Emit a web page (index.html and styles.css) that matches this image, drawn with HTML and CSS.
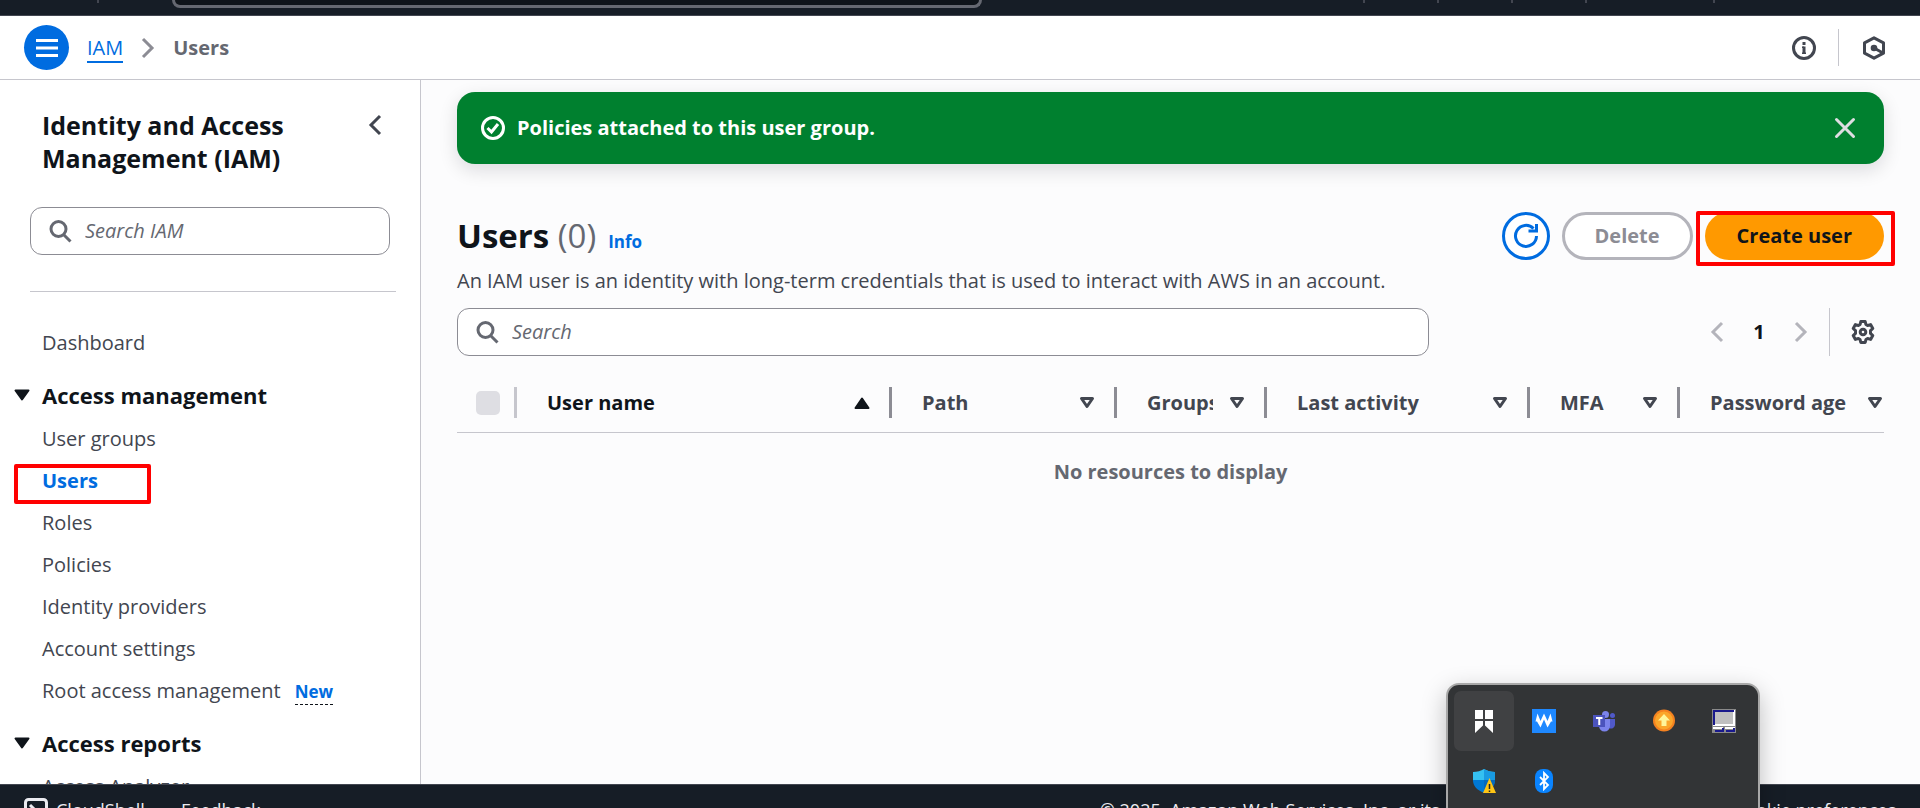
FILE: index.html
```html
<!DOCTYPE html>
<html lang="en">
<head>
<meta charset="utf-8">
<title>Users | IAM</title>
<link rel="stylesheet" href="styles.css">
</head>
<body>
<div class="page">
  <div class="topbar">
    <span class="topbar-rule"></span>
    <div class="topbar-search"></div>
    <div class="topbar-tools"><span class="topbar-rule"></span><span class="topbar-rule"></span><span class="topbar-rule"></span><span class="topbar-rule"></span><span class="topbar-rule topbar-account"></span></div>
  </div>

  <header class="crumbs-bar">
    <button class="menu-button" aria-label="Open navigation">
      <svg width="24" height="24" viewBox="0 0 24 24" fill="none" stroke="#fff" stroke-width="3"><path d="M1 4.500h22M1 12h22M1 19.500h22"/></svg>
    </button>
    <nav class="crumbs" aria-label="Breadcrumbs">
      <a class="crumb-link" href="#">IAM</a>
      <svg width="14" height="22" viewBox="0 0 14 22" fill="none" stroke="#8c8c94" stroke-width="3"><path d="M2 2l9 9-9 9"/></svg>
      <span class="crumb-current">Users</span>
    </nav>
    <div class="header-tools">
      <button class="icon-button" aria-label="Info">
        <svg width="24" height="24" viewBox="0 0 24 24" fill="none" stroke="#424650" stroke-width="3"><circle cx="12" cy="12" r="10.500"/><path d="M12 6v3M12 10.500V18"/><path d="M10 11.300h2M10 17.200h4" stroke-width="1.500"/></svg>
      </button>
      <span class="tool-rule"></span>
      <button class="icon-button" aria-label="Amazon Q">
        <svg width="24" height="24" viewBox="0 0 24 24" fill="none" stroke="#424650" stroke-width="3" stroke-linejoin="round"><path d="M12 1.800l9.500 5v10.400L12 22.200l-9.500-5V6.800z"/><path d="M12 12l9 5"/><circle cx="12" cy="12" r="3.300" fill="#424650" stroke="none"/></svg>
      </button>
    </div>
  </header>

  <div class="body">
    <aside class="sidebar">
      <div class="side-head">
        <h2 class="side-title">Identity and Access Management (IAM)</h2>
        <button class="icon-button" aria-label="Close navigation">
          <svg width="14" height="22" viewBox="0 0 14 22" fill="none" stroke="#424650" stroke-width="3"><path d="M12 2l-9 9 9 9"/></svg>
        </button>
      </div>
      <label class="search side-search">
        <svg width="24" height="24" viewBox="0 0 24 24" fill="none" stroke="#656871" stroke-width="3"><circle cx="10.500" cy="10" r="7.500"/><path d="M15.500 15.500l7 7"/></svg>
        <input class="search-input" type="text" placeholder="Search IAM" aria-label="Search IAM">
      </label>
      <hr class="side-divider">
      <nav class="side-nav" aria-label="IAM">
        <a class="nav-link" href="#">Dashboard</a>
        <button class="nav-section"><svg width="16" height="12" viewBox="0 0 16 12"><path d="M1.500 1.500h13L8 10.500z" fill="#0f141a" stroke="#0f141a" stroke-width="2" stroke-linejoin="round"/></svg>Access management</button>
        <a class="nav-link" href="#">User groups</a>
        <a class="nav-link nav-active" href="#">Users<span class="mark mark-users"></span></a>
        <a class="nav-link" href="#">Roles</a>
        <a class="nav-link" href="#">Policies</a>
        <a class="nav-link" href="#">Identity providers</a>
        <a class="nav-link" href="#">Account settings</a>
        <div class="nav-row"><a class="nav-link" href="#">Root access management</a><button class="nav-new">New</button></div>
        <button class="nav-section"><svg width="16" height="12" viewBox="0 0 16 12"><path d="M1.500 1.500h13L8 10.500z" fill="#0f141a" stroke="#0f141a" stroke-width="2" stroke-linejoin="round"/></svg>Access reports</button>
        <a class="nav-link" href="#">Access Analyzer</a>
      </nav>
    </aside>

    <main class="main">
      <div class="flash" role="status">
        <svg width="24" height="24" viewBox="0 0 24 24" fill="none" stroke="#fff" stroke-width="3"><circle cx="12" cy="12" r="10.500"/><path d="M6.500 12l4 4 6.500-8"/></svg>
        <span class="flash-text">Policies attached to this user group.</span>
        <button class="icon-button" aria-label="Dismiss">
          <svg width="22" height="22" viewBox="0 0 22 22" fill="none" stroke="#dedee3" stroke-width="3" stroke-linecap="round"><path d="M2.500 2.500l17 17M19.500 2.500l-17 17"/></svg>
        </button>
      </div>

      <div class="title-row">
        <h1 class="title">Users <span class="count">(0)</span></h1>
        <a class="info" href="#">Info</a>
        <div class="actions">
          <button class="btn btn-refresh" aria-label="Refresh">
            <svg width="26" height="26" viewBox="0 0 26 26" fill="none" stroke="#006ce0" stroke-width="3"><path d="M23.500 13A10.500 10.500 0 1 1 20.500 5.500"/><path d="M23.500 1v7H15.500"/></svg>
          </button>
          <button class="btn btn-delete" disabled>Delete</button>
          <button class="btn btn-create">Create user<span class="mark mark-create"></span></button>
        </div>
      </div>
      <p class="description">An IAM user is an identity with long-term credentials that is used to interact with AWS in an account.</p>

      <div class="filter-row">
        <label class="search table-search">
          <svg width="24" height="24" viewBox="0 0 24 24" fill="none" stroke="#656871" stroke-width="3"><circle cx="10.500" cy="10" r="7.500"/><path d="M15.500 15.500l7 7"/></svg>
          <input class="search-input" type="text" placeholder="Search" aria-label="Search users">
        </label>
        <div class="pager">
          <button class="icon-button" aria-label="Previous page"><svg width="14" height="22" viewBox="0 0 14 22" fill="none" stroke="#b4b4bb" stroke-width="3"><path d="M12 2l-9 9 9 9"/></svg></button>
          <button class="page-number">1</button>
          <button class="icon-button" aria-label="Next page"><svg width="14" height="22" viewBox="0 0 14 22" fill="none" stroke="#b4b4bb" stroke-width="3"><path d="M2 2l9 9-9 9"/></svg></button>
          <span class="pager-rule"></span>
          <button class="icon-button" aria-label="Preferences"><svg width="24" height="24" viewBox="0 0 24 24" fill="none" stroke="#424650" stroke-width="3" stroke-linejoin="round"><path d="M9.800 1.500h4.400l.7 3 1.700 1 3-.9 2.200 3.800-2.300 2.200v2.800l2.300 2.200-2.200 3.800-3-.9-1.700 1-.7 3H9.800l-.7-3-1.700-1-3 .9-2.200-3.800 2.300-2.200v-2.800L2.200 8.400l2.200-3.800 3 .9 1.700-1z"/><circle cx="12" cy="12" r="2.800"/></svg></button>
        </div>
      </div>

      <table class="table">
        <colgroup><col class="c-check"><col><col class="c-path"><col class="c-small"><col class="c-last"><col class="c-small"><col class="c-age"></colgroup>
        <thead>
          <tr>
            <th><div class="th-in th-check"><input class="check" type="checkbox" disabled aria-label="Select all"></div></th>
            <th><div class="th-in th-sorted"><span class="th-text">User name</span><svg width="16" height="14" viewBox="0 0 16 14"><path d="M1.500 12h13L8 2.500z" fill="#0f141a" stroke="#0f141a" stroke-width="2" stroke-linejoin="round"/></svg></div></th>
            <th><div class="th-in"><span class="th-text">Path</span><svg width="16" height="14" viewBox="0 0 16 14" fill="none" stroke="#424650" stroke-width="3" stroke-linejoin="round"><path d="M2.500 2.500h11L8 10.500z"/></svg></div></th>
            <th><div class="th-in"><span class="th-text">Groups</span><svg width="16" height="14" viewBox="0 0 16 14" fill="none" stroke="#424650" stroke-width="3" stroke-linejoin="round"><path d="M2.500 2.500h11L8 10.500z"/></svg></div></th>
            <th><div class="th-in"><span class="th-text">Last activity</span><svg width="16" height="14" viewBox="0 0 16 14" fill="none" stroke="#424650" stroke-width="3" stroke-linejoin="round"><path d="M2.500 2.500h11L8 10.500z"/></svg></div></th>
            <th><div class="th-in"><span class="th-text">MFA</span><svg width="16" height="14" viewBox="0 0 16 14" fill="none" stroke="#424650" stroke-width="3" stroke-linejoin="round"><path d="M2.500 2.500h11L8 10.500z"/></svg></div></th>
            <th><div class="th-in th-last"><span class="th-text">Password age</span><svg width="16" height="14" viewBox="0 0 16 14" fill="none" stroke="#424650" stroke-width="3" stroke-linejoin="round"><path d="M2.500 2.500h11L8 10.500z"/></svg></div></th>
          </tr>
        </thead>
        <tbody><tr><td class="empty" colspan="7">No resources to display</td></tr></tbody>
      </table>
    </main>
  </div>

  <footer class="footer">
    <a class="foot-shell" href="#"><svg width="24" height="24" viewBox="0 0 24 24" fill="none" stroke="#ebebf0" stroke-width="3"><rect x="1.500" y="1.500" width="21" height="21" rx="3"/><path d="M6 7l5 5-5 5M12 17h6"/></svg>CloudShell</a>
    <a href="#">Feedback</a>
    <span class="copyright">© 2025, Amazon Web Services, Inc. or its affiliates.</span>
    <a href="#">Privacy</a>
    <a href="#">Terms</a>
    <a href="#">Cookie preferences</a>
  </footer>

  <div class="tray">
    <button class="tray-item tray-hover" aria-label="App"><svg width="24" height="24" viewBox="0 0 24 24" fill="#fff"><path d="M3 1h8v9H3zM13 1h8v9h-8zM3 12h8v4.500L3 24zM13 12h8v12l-8-7.500z"/></svg></button>
    <button class="tray-item" aria-label="Wave"><svg width="24" height="24" viewBox="0 0 24 24"><rect width="24" height="24" fill="#1e88ff"/><path d="M3.500 12.500L5.500 4.500l3 7.500L12 4.500l3.500 7.500 3-7.500 2 8-1.500 0L15.500 18.500 12 10.500 8.500 18.500 5 12.500z" fill="#fff"/></svg></button>
    <button class="tray-item" aria-label="Teams"><svg width="24" height="24" viewBox="0 0 24 24"><circle cx="13.500" cy="5.500" r="3.500" fill="#7b83eb"/><circle cx="20.500" cy="6.500" r="2.500" fill="#5059c9"/><path d="M17 10h6v6a4 4 0 0 1-6 3z" fill="#5059c9"/><path d="M7 10h11v7a5.500 5.500 0 0 1-11 0z" fill="#7b83eb"/><rect x="1" y="6" width="12" height="12" fill="#4b53bc"/><path d="M4 9h6.500M7.250 9v7" stroke="#fff" stroke-width="2"/></svg></button>
    <button class="tray-item" aria-label="Update"><svg width="24" height="24" viewBox="0 0 24 24"><circle cx="12" cy="11.500" r="11" fill="#f58220"/><circle cx="12" cy="11.500" r="9" fill="#fba62a"/><path d="M12 5l6 6.500h-3.500V17h-5v-5.500H6z" fill="#fff59a"/></svg></button>
    <button class="tray-item" aria-label="Display"><svg width="24" height="24" viewBox="0 0 24 24"><rect width="24" height="24" fill="#8a8a8a"/><path d="M1 1h22v16H1z" fill="#fff"/><path d="M1 1h21v2H3v13H1z" fill="#1a1a8c"/><path d="M3 3h18v12H3z" fill="#c0c0c0"/><path d="M1 18h10v2H1zM13 18h10v2H13z" fill="#fff"/><path d="M3 21h7v-2h2v4H3zM14 21h7v-2h2v4h-9z" fill="#1a1a8c"/></svg></button>
    <button class="tray-item" aria-label="Security"><svg width="24" height="24" viewBox="0 0 24 24"><path d="M12 0c3 2 7 3 11 3v9H1V3c4 0 8-1 11-3z" fill="#35c1f1"/><path d="M1 11h22c0 6-4 10-11 13C5 21 1 17 1 11z" fill="#0078d4"/><path d="M12 0c3 2 7 3 11 3v8H12z" fill="#199be2"/><path d="M12 11h11c0 6-4 10-11 13z" fill="#0669bd"/><path d="M17.500 9L24 24H11z" fill="#ffc515"/><path d="M17.500 15v5M17.500 21.500v1.500" stroke="#222" stroke-width="1.500"/></svg></button>
    <button class="tray-item" aria-label="Bluetooth"><svg width="24" height="24" viewBox="0 0 24 24"><rect x="3" width="18" height="24" rx="8" fill="#0a84ff"/><path d="M8 8l8 8-4 4V4l4 4-8 8" fill="none" stroke="#fff" stroke-width="1.800"/></svg></button>
  </div>
</div>
</body>
</html>
```
FILE: styles.css
```css
* { box-sizing: border-box; }
body {
  margin: 0;
  font-family: "Open Sans", "Noto Sans", sans-serif;
  font-size: 20px;
  line-height: 30px;
  color: #424650;
  background: #fcfcfd;
}
button { font: inherit; color: inherit; background: none; border: 0; padding: 0; cursor: pointer; }
a { color: inherit; text-decoration: none; }
svg { display: block; flex: none; }

.page { height: 100vh; display: flex; flex-direction: column; overflow: hidden; position: relative; }

.topbar {
  display: flex; align-items: flex-start; flex: none;
  height: 16px; padding-left: 97px;
  background: #161d26; border-bottom: 1px solid #424650;
}
.topbar-rule { width: 2px; height: 3px; background: #424650; }
.topbar-search { width: 810px; height: 8px; margin-left: 73px; background: #0f141a; border: 3px solid #656871; border-top: 0; border-radius: 0 0 12px 12px; }
.topbar-tools { display: flex; gap: 72px; margin-left: auto; padding-right: 205px; }
.topbar-account { margin-left: 54px; }

.crumbs-bar {
  display: flex; align-items: center; flex: none;
  height: 64px; padding: 0 34px 0 24px;
  background: #fff; border-bottom: 1px solid #c6c6cd;
}
.menu-button { display: grid; place-items: center; width: 45px; height: 45px; border-radius: 50%; background: #006ce0; }
.crumbs { display: flex; align-items: center; gap: 18px; margin-left: 18px; }
.crumb-link { padding-top: 2px; color: #006ce0; line-height: 26px; border-bottom: 2px solid #006ce0; }
.crumb-current { color: #656871; font-weight: 700; }
.icon-button { display: grid; place-items: center; }
.header-tools { display: flex; align-items: center; gap: 22px; margin-left: auto; }
.tool-rule { width: 1px; height: 37px; margin-right: 1px; background: #c6c6cd; }

.body { flex: 1; min-height: 0; display: flex; }
.sidebar { flex: none; width: 421px; padding: 29px 24px 0 30px; background: #fff; border-right: 1px solid #c6c6cd; overflow: hidden; }
.side-head { display: flex; align-items: flex-start; justify-content: space-between; padding: 0 14px 0 12px; }
.side-head .icon-button { margin-top: 5px; }
.side-title { margin: 0; width: 270px; font-size: 25px; line-height: 33px; color: #0f141a; }
.search { display: flex; align-items: center; gap: 13px; height: 48px; padding: 0 16px 0 17px; background: #fff; border: 1px solid #8c8c94; border-radius: 12px; }
.search-input { flex: 1; min-width: 0; border: 0; padding: 0; outline: 0; background: none; font: inherit; color: #0f141a; }
.search-input::placeholder { color: #656871; font-style: italic; opacity: 1; }
.side-search { margin: 32px 6px 0 0; }
.side-divider { margin: 36px 0 0; border: 0; border-top: 1px solid #c6c6cd; }
.side-nav { display: flex; flex-direction: column; align-items: flex-start; padding: 36px 0 0 12px; gap: 12px; }
.nav-link { position: relative; white-space: nowrap; }
.nav-section { display: flex; align-items: center; gap: 12px; margin: 12px 0 4px -28px; font-size: 22px; line-height: 26px; font-weight: 700; color: #0f141a; }
.nav-active { color: #006ce0; font-weight: 700; }
.nav-row { display: flex; align-items: baseline; gap: 14px; }
.nav-new { font-size: 17px; line-height: 24px; font-weight: 700; color: #006ce0; border-bottom: 1px dashed #0f141a; }
.mark { position: absolute; border: 4px solid #f00; border-radius: 2px; pointer-events: none; }
.mark-users { left: -28px; top: -2px; width: 137px; height: 40px; }
.mark-create { inset: -1px -11px -6px -9px; }

.main { flex: 1; min-width: 0; padding: 12px 36px 0; }
.flash { display: flex; align-items: center; gap: 12px; height: 72px; padding: 0 28px 0 24px; border-radius: 18px; background: #00802f; color: #fff; box-shadow: 0 6px 18px 1px rgba(0, 7, 22, .12); }
.flash-text { flex: 1; font-weight: 700; }
.title-row { display: flex; align-items: baseline; margin-top: 48px; }
.title { margin: 0; font-size: 33px; line-height: 48px; color: #0f141a; }
.count { font-weight: 400; color: #656871; }
.info { margin-left: 12px; font-size: 17px; font-weight: 700; color: #006ce0; }
.actions { display: flex; gap: 12px; margin-left: auto; align-self: center; }
.btn { position: relative; height: 48px; border-radius: 24px; font-weight: 700; }
.btn-refresh { display: grid; place-items: center; width: 48px; border: 3px solid #006ce0; background: #fff; }
.btn-delete { padding: 0 30px; border: 3px solid #b4b4bb; background: #fff; color: #8c8c94; }
.btn-create { padding: 0 32px; background: #ff9900; color: #0f141a; }
.description { margin: 6px 0 12px; }
.filter-row { display: flex; align-items: center; justify-content: space-between; }
.table-search { flex: 0 1 972px; }
.pager { display: flex; align-items: center; gap: 21px; padding-right: 9px; }
.page-number { width: 28px; font-weight: 700; color: #0f141a; }
.pager-rule { width: 1px; height: 48px; background: #c6c6cd; }

.table { width: 100%; margin-top: 17px; table-layout: fixed; border-collapse: collapse; }
.c-check { width: 60px; }
.c-path { width: 225px; }
.c-small { width: 150px; }
.c-last { width: 263px; }
.c-age { width: 204px; }
.table th { padding: 14px 0; border-bottom: 1px solid #c6c6cd; text-align: left; font-weight: 700; }
.th-in { display: flex; align-items: center; gap: 16px; height: 31px; padding: 0 19px 0 30px; border-right: 3px solid #8c8c94; }
.th-text { flex: 1; min-width: 0; overflow: hidden; white-space: nowrap; }
.th-sorted { color: #0f141a; }
.th-last { border-right: 0; padding-right: 1px; }
.th-check { padding: 0 0 0 19px; border-color: #c6c6cd; }
.check { appearance: none; width: 24px; height: 24px; margin: 0; border-radius: 5px; background: #dedee3; }
.empty { padding: 24px 0; text-align: center; font-weight: 700; color: #656871; }

.footer { display: flex; flex: none; gap: 34px; height: 24px; padding: 13px 24px 0; overflow: hidden; background: #161d26; border-top: 1px solid #424650; color: #ebebf0; font-size: 18px; line-height: 24px; white-space: nowrap; }
.foot-shell { display: flex; gap: 8px; padding-right: 2px; }
.copyright { margin-left: auto; }

.tray { position: absolute; right: 160px; bottom: -60px; display: grid; grid-template-columns: repeat(5, 60px); align-content: start; width: 314px; height: 185px; padding: 6px; background: #323436; border: 2px solid #a8a8a8; border-radius: 13px; box-shadow: 0 8px 24px rgba(0, 0, 0, .25); }
.tray-item { display: grid; place-items: center; height: 60px; border-radius: 7px; }
.tray-hover { background: #404143; }
```
